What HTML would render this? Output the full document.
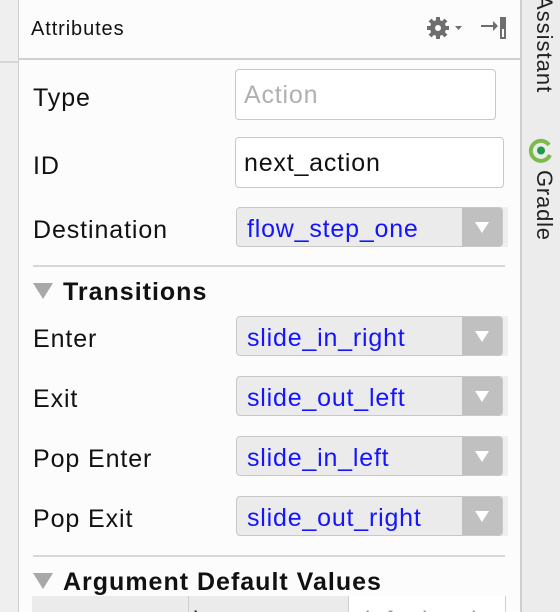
<!DOCTYPE html>
<html><head><meta charset="utf-8"><style>
*{margin:0;padding:0;box-sizing:border-box}
body{width:560px;height:612px;overflow:hidden;background:#fcfcfc;font-family:"Liberation Sans",Arial,sans-serif;position:relative}
.a{position:absolute}
.lbl{position:absolute;left:33px;font-size:25px;letter-spacing:0.9px;color:#111;line-height:40px;height:40px;padding-top:3px}
.dd{position:absolute;left:236px;width:267px;height:40px;background:#ebebeb;border:1px solid #c8c8c8;border-radius:4px;overflow:hidden}
.dd span{position:absolute;left:10px;top:2px;line-height:38px;font-size:25px;letter-spacing:0.8px;color:#1414ff}
.dd i{position:absolute;right:0;top:0;width:40px;height:38px;background:#c0c0c0}
.dd i:after{content:"";position:absolute;left:13px;top:14px;border-left:7px solid transparent;border-right:7px solid transparent;border-top:11px solid #fff}
.ddbg{position:absolute;left:500px;width:8px;height:40px;background:#eeeeee}
.in{position:absolute;left:235px;border:1.5px solid #c8c8c8;border-radius:4px;background:#fff;font-size:25px;letter-spacing:0.8px;padding-left:8px;padding-top:3px}
.sep{position:absolute;left:33px;width:472px;height:2px;background:#d6d6d6}
.hd{position:absolute;left:63px;font-size:25px;font-weight:bold;letter-spacing:1px;color:#111;line-height:30px}
.tri{position:absolute;left:33px;border-left:10px solid transparent;border-right:10px solid transparent;border-top:16px solid #a8a8a8}
</style></head><body>
<div class="a" style="left:0;top:0;width:19px;height:612px;background:#efefef;border-right:1px solid #cfcfcf"></div>
<div class="a" style="left:0;top:61px;width:18px;height:2px;background:#d6d6d6"></div>
<div class="a" style="left:520px;top:0;width:40px;height:612px;background:#ececec;border-left:2px solid #cfcfcf"></div>
<div class="a" style="left:19px;top:58px;width:501px;height:2px;background:#d0d0d0"></div>
<div class="a" style="left:31px;top:18px;font-size:20px;letter-spacing:0.9px;color:#111">Attributes</div>
<svg class="a" style="left:425px;top:15px" width="85" height="28" viewBox="0 0 85 28">
<g fill="#6e6e6e">
<circle cx="13" cy="13" r="8"/>
<g stroke="#6e6e6e" stroke-width="4">
<line x1="13" y1="2" x2="13" y2="24"/><line x1="2" y1="13" x2="24" y2="13"/>
<line x1="5" y1="5" x2="21" y2="21"/><line x1="21" y1="5" x2="5" y2="21"/></g>
<circle cx="13" cy="13" r="3" fill="#fcfcfc"/>
<polygon points="30,11 37,11 33.5,15"/>
<rect x="56" y="10" width="13" height="2"/>
<polygon points="68,6 73,11 68,16"/>
<rect x="75" y="2" width="6" height="22"/>
<rect x="77" y="14" width="2" height="8" fill="#fcfcfc"/>
</g></svg>
<div class="a" style="left:527px;top:0;width:30px;height:100px;"><div style="position:absolute;left:30px;top:-5px;transform-origin:0 0;transform:rotate(90deg);font-size:22px;letter-spacing:1px;color:#222;white-space:nowrap">Assistant</div></div>
<svg class="a" style="left:528px;top:138px" width="26" height="26" viewBox="0 0 26 26"><path d="M21 7 A10 10 0 1 0 22 17" fill="none" stroke="#7cbb4a" stroke-width="4"/><circle cx="13" cy="12.5" r="4" fill="#1d9a4d"/></svg>
<div class="a" style="left:527px;top:170px;width:30px;height:80px;"><div style="position:absolute;left:30px;top:0;transform-origin:0 0;transform:rotate(90deg);font-size:22px;letter-spacing:0.8px;color:#222;white-space:nowrap">Gradle</div></div>

<div class="lbl" style="top:75px">Type</div>
<div class="in" style="top:69px;width:261px;height:51px;line-height:44px;color:#b0b0b0">Action</div>
<div class="lbl" style="top:143px">ID</div>
<div class="in" style="top:137px;width:269px;height:51px;line-height:44px;color:#111">next_action</div>
<div class="lbl" style="top:207px">Destination</div>
<div class="ddbg" style="top:207px"></div><div class="dd" style="top:207px"><span>flow_step_one</span><i></i></div>

<div class="sep" style="top:265px"></div>
<div class="tri" style="top:283px"></div>
<div class="hd" style="top:277px">Transitions</div>

<div class="lbl" style="top:316px">Enter</div>
<div class="ddbg" style="top:316px"></div><div class="dd" style="top:316px"><span>slide_in_right</span><i></i></div>
<div class="lbl" style="top:376px">Exit</div>
<div class="ddbg" style="top:376px"></div><div class="dd" style="top:376px"><span>slide_out_left</span><i></i></div>
<div class="lbl" style="top:436px">Pop Enter</div>
<div class="ddbg" style="top:436px"></div><div class="dd" style="top:436px"><span>slide_in_left</span><i></i></div>
<div class="lbl" style="top:496px">Pop Exit</div>
<div class="ddbg" style="top:496px"></div><div class="dd" style="top:496px"><span>slide_out_right</span><i></i></div>

<div class="sep" style="top:555px"></div>
<div class="tri" style="top:573px"></div>
<div class="hd" style="top:567px">Argument Default Values</div>

<div class="a" style="left:32px;top:596px;width:474px;height:16px;overflow:hidden;font-size:24px;letter-spacing:1px;color:#222">
<div class="a" style="left:0;top:0;width:157px;height:16px;background:#ebebeb;border-right:1px solid #d0d0d0"><span style="position:absolute;left:3px;top:11px">step</span></div>
<div class="a" style="left:157px;top:0;width:160px;height:16px;background:#ebebeb;border-right:1px solid #d0d0d0"><span style="position:absolute;left:4px;top:11px">integer</span></div>
<div class="a" style="left:317px;top:0;width:157px;height:16px;background:#fff;border-right:1px solid #d0d0d0;color:#999"><span style="position:absolute;left:8px;top:11px;white-space:nowrap">default valu</span></div>
</div>
</body></html>
